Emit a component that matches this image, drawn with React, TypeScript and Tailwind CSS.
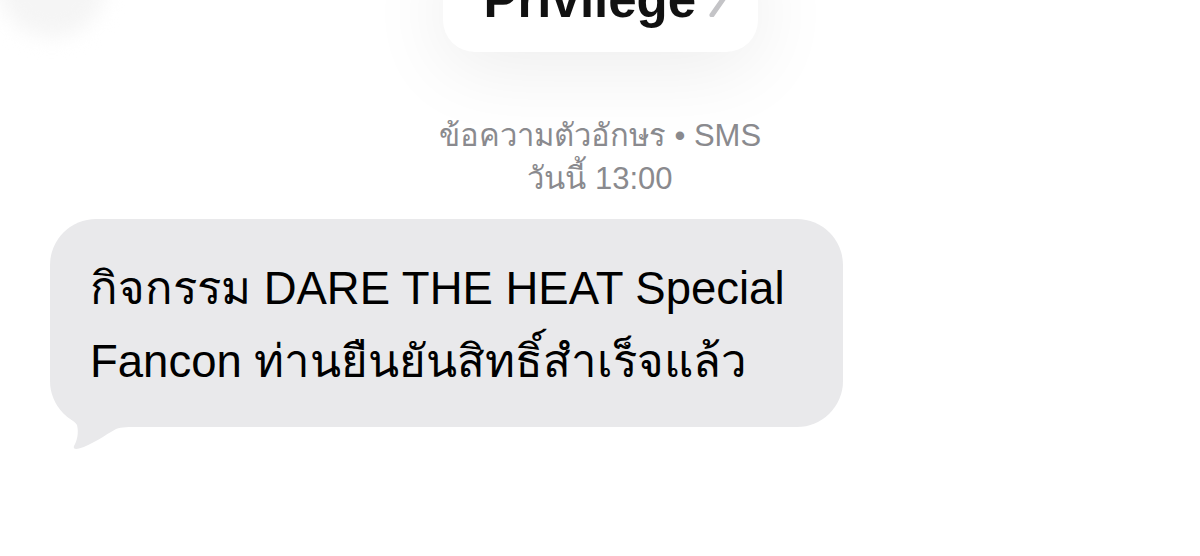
export default function App() {
  return (
    <div className="relative w-[1200px] h-[556px] overflow-hidden bg-white font-['Liberation_Sans','Noto_Sans',sans-serif]">
      {/* faint blurred shape peeking in at top-left */}
      <div className="absolute -left-[2px] -top-[95px] w-[108px] h-[132px] rounded-full bg-[#f5f5f5] blur-[10px]" />

      {/* privilege card, cut off by top edge */}
      <div className="flex justify-center">
        <div className="flex items-end w-[315px] h-[110px] -mt-[58px] pl-[41px] pb-[27px] rounded-[32px] bg-white shadow-[0_16px_80px_rgba(0,0,0,0.075)]">
          <span className="text-[51px] leading-[51px] font-bold text-[#111111]">Privilege</span>
          <svg width="22" height="44" viewBox="0 0 22 44" className="ml-[12px] mb-[8px] shrink-0">
            <path d="M4 2 L18 22 L4 42" fill="none" stroke="#c4c4c7" strokeWidth="5" strokeLinecap="round" strokeLinejoin="round" />
          </svg>
        </div>
      </div>

      {/* timestamp */}
      <div className="mt-[62px] flex flex-col items-center text-[31px] leading-[43px] text-[#8a8a8e]">
        <div>ข้อความตัวอักษร • SMS</div>
        <div>วันนี้ 13:00</div>
      </div>

      {/* incoming bubble */}
      <div className="relative ml-[50px] mt-[19px] w-[793px] rounded-[46px] bg-[#e9e9eb] pl-[40px] pt-[33px] pb-[29px] text-[45.5px] leading-[73px] text-black">
        <div>กิจกรรม DARE THE HEAT Special</div>
        <div>Fancon ท่านยืนยันสิทธิ์สำเร็จแล้ว</div>
        <svg width="90" height="62" viewBox="0 0 90 62" className="absolute left-0 top-[170px]">
          <path
            d="M6 0 L6 14 C14 26, 24 31, 27 36 C29 44, 27 52, 24 57 C23 59.5, 25 60.5, 29 59.5 C42 56, 55 46, 66 40 C72 38, 78 38, 90 38 L90 0 Z"
            fill="#e9e9eb"
          />
        </svg>
      </div>
    </div>
  );
}
